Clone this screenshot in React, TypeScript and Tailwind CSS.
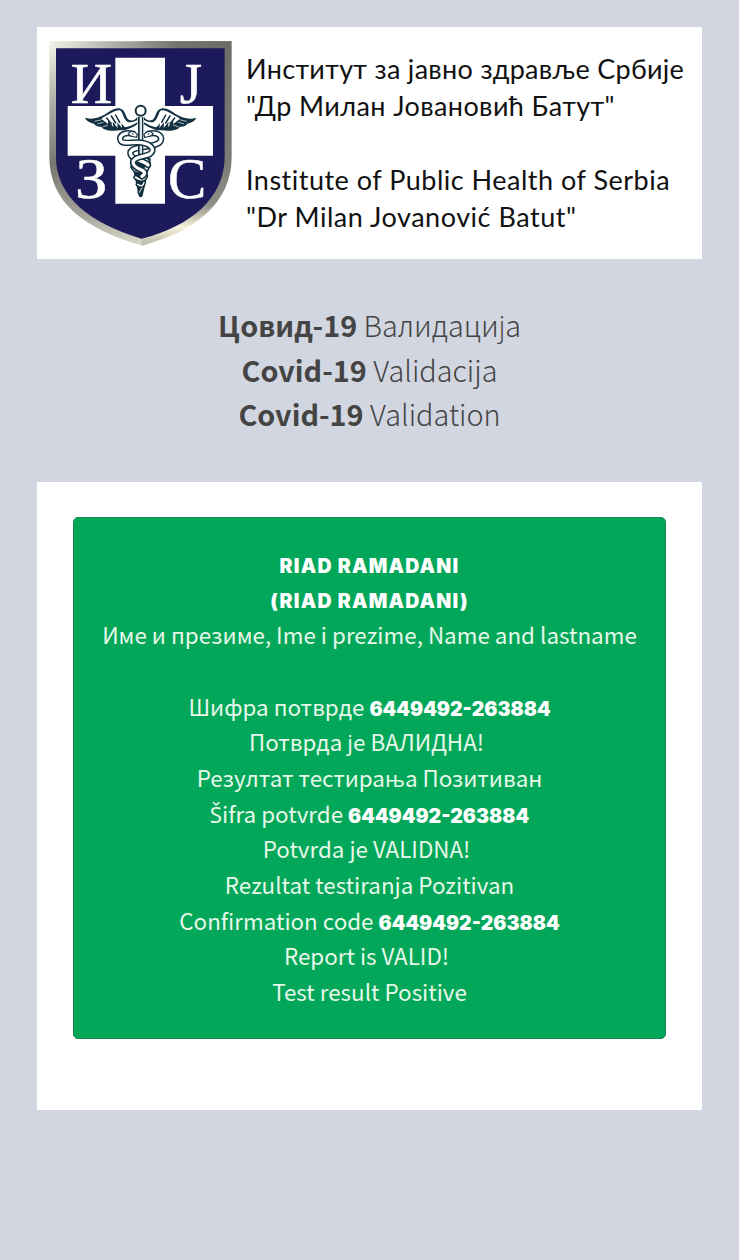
import type { ReactNode } from "react";

const NAVY = "#1d1a5c";
const INK = "#12303f";

function Wing() {
  return (
    <g>
      <path
        d="M15 68 C35 75 55 70 76 58 C92 46 108 36 122 41 C137 46 136 66 146 74 C156 79 166 75 172 66 L172 88 C160 98 148 100 134 106 C112 104 95 111 78 104 C70 102 66 98 64 95 C52 96 44 91 42 86 C28 83 18 76 15 68Z"
        fill={INK}
      />
      <path
        d="M66 69 C92 55 108 44 120 46 C129 50 130 74 142 80 C152 84 164 80 172 75 L172 82 C160 90 148 95 136 97 C130 92 126 88 124 84 L126 99 L112 82 L113 99 L98 80 L100 97 L84 76 L84 92 L66 75Z"
        fill="#fff"
      />
      <path d="M44 79 L66 74 M52 87 L74 80 M68 96 L84 90" stroke="#fff" strokeWidth="2" fill="none" />
      <path d="M66 76 L82 88 M80 69 L94 86 M94 63 L107 84 M107 60 L119 82" stroke={INK} strokeWidth="4.5" fill="none" strokeLinecap="round" />
    </g>
  );
}

function Snake({ d, width = 9 }: { d: string; width?: number }) {
  return (
    <g fill="none" strokeLinecap="round" strokeLinejoin="round">
      <path d={d} stroke={INK} strokeWidth={width + 9} />
      <path d={d} stroke="#fff" strokeWidth={width} />
    </g>
  );
}

function Crest() {
  return (
    <svg viewBox="3 3 627 696" className="h-[232px] w-[209px] shrink-0" role="img">
      <defs>
        <linearGradient id="rimTop" x1="0" y1="0" x2="1" y2="0">
          <stop offset="0" stopColor="#f3f2e8" />
          <stop offset="0.35" stopColor="#b0afa8" />
          <stop offset="0.7" stopColor="#74736f" />
          <stop offset="1" stopColor="#6c6b68" />
        </linearGradient>
        <linearGradient id="rimLeft" x1="0" y1="0" x2="0" y2="1">
          <stop offset="0" stopColor="#f6f5ec" />
          <stop offset="0.25" stopColor="#bab9b0" />
          <stop offset="0.6" stopColor="#777670" />
          <stop offset="0.85" stopColor="#a5a49a" />
          <stop offset="1" stopColor="#dcdacb" />
        </linearGradient>
        <linearGradient id="rimRight" x1="0" y1="0" x2="0" y2="1">
          <stop offset="0" stopColor="#6c6b68" />
          <stop offset="0.6" stopColor="#7d7c77" />
          <stop offset="0.8" stopColor="#8f8e86" />
          <stop offset="0.91" stopColor="#f7f3da" />
          <stop offset="1" stopColor="#b5b3a5" />
        </linearGradient>
      </defs>
      <path d="M317 46 H587 V392 C587 530 480 615 317 659Z" fill="url(#rimRight)" />
      <path d="M40 46 H318 V659 C145 608 40 530 40 392Z" fill="url(#rimLeft)" />
      <path d="M40 46 H587 L566 68 H60Z" fill="url(#rimTop)" />
      <path d="M60 67 H566 V392 C566 515 465 600 317 638 C165 592 60 515 60 392Z" fill={NAVY} />
      <path d="M238 95 H387 V240 H531 V389 H387 V533 H238 V389 H95 V240 H238Z" fill="#fff" />
      <g fill="#fff" stroke="#fff" strokeWidth="1.5" className="[font-family:'Liberation_Serif',serif] text-[172px]">
        <text x="104" y="230">И</text>
        <text x="431" y="230">Ј</text>
        <text x="117" y="515" textLength="98" lengthAdjust="spacingAndGlyphs">З</text>
        <text x="396" y="515">С</text>
      </g>
      <g transform="translate(132 207)">
        <Wing />
        <g transform="translate(364 0) scale(-1 1)">
          <Wing />
        </g>
        <path d="M152 190 L213 190 L188 302 Q182 312 176 302Z" fill={INK} />
        <Snake d="M178 292 C182 284 188 278 188 272" width={3} />
        <Snake d="M173 268 C184 276 190 272 192 262" width={4} />
        <Snake d="M167 247 C178 256 192 256 197 244" width={6} />
        <Snake d="M160 216 C170 232 196 232 203 212 C205 202 200 194 190 190" width={9} />
        <Snake d="M206 116 C232 110 248 122 242 138 C236 150 210 153 190 156 C158 160 144 168 154 182 C162 194 196 198 204 210" width={10} />
        <path d="M174 66 H190 V180 H174Z" fill={INK} />
        <path d="M179 66 H186 V180 H179Z" fill="#dfe5e8" />
        <Snake d="M158 116 C132 110 116 122 122 137 C128 150 160 139 184 143 C216 148 226 166 210 177 C196 186 168 184 160 198 C155 210 170 219 186 226 C198 232 194 240 186 244" width={10} />
        <path d="M145 116 C151 107 163 107 172 118 L170 127 C160 125 150 125 145 116Z M219 116 C213 107 201 107 192 118 L194 127 C204 125 214 125 219 116Z" fill="#fff" stroke={INK} strokeWidth="3.5" />
        <circle cx="182" cy="47" r="15" fill="#fff" stroke={INK} strokeWidth="6" />
        <circle cx="158" cy="117" r="2.5" fill={INK} />
        <circle cx="206" cy="117" r="2.5" fill={INK} />
      </g>
    </svg>
  );
}

function Row({ children, className = "" }: { children: ReactNode; className?: string }) {
  return <p className={`h-[35.7px] ${className}`}>{children}</p>;
}

function Name({ children }: { children: ReactNode }) {
  return (
    <span className="[font-family:Inter,'Liberation_Sans',sans-serif] text-[19.5px] font-black tracking-[1.2px] text-white">
      {children}
    </span>
  );
}

function Code({ children }: { children: ReactNode }) {
  return (
    <span className="[font-family:Inter,'Liberation_Sans',sans-serif] text-[19.5px] font-black text-white">
      {children}
    </span>
  );
}

export default function App() {
  return (
    <div className="min-h-[1260px] w-[739px] bg-[#d2d6e0] px-[37px] pt-[27px]">
      <header className="flex h-[232px] bg-white">
        <Crest />
        <div className="flex flex-col pt-[23px] [font-family:Lato,'Open_Sans',sans-serif] text-[27px] leading-[37px] whitespace-nowrap text-[#111]">
          <p className="tracking-[0.3px]">Институт за јавно здравље Србије</p>
          <p className="tracking-[0.4px]">"Др Милан Јовановић Батут"</p>
          <p className="mt-[37px] tracking-[0.5px]">Institute of Public Health of Serbia</p>
          <p className="tracking-[0.53px]">"Dr Milan Jovanović Batut"</p>
        </div>
      </header>

      <h1 className="mt-[44px] text-center [font-family:'Noto_Sans_CJK_SC','Open_Sans',sans-serif] text-[28.8px] leading-[44.6px] font-light whitespace-nowrap text-[#444]">
        <div><b className="font-bold">Цовид-19</b> Валидација</div>
        <div><b className="font-bold">Covid-19</b> Validacija</div>
        <div><b className="font-bold">Covid-19</b> Validation</div>
      </h1>

      <main className="mt-[45px] h-[628px] bg-white px-[36px] pt-[35px]">
        <section className="h-[522px] rounded-[5px] border border-[#1b8552] bg-[#03a75a] pt-[28px] text-center [font-family:'Noto_Sans_CJK_SC','Open_Sans',sans-serif] text-[22.4px] leading-[35.7px] whitespace-nowrap text-[#e6f8e9]">
          <Row><Name>RIAD RAMADANI</Name></Row>
          <Row><Name>(RIAD RAMADANI)</Name></Row>
          <Row>Име и презиме, Ime i prezime, Name and lastname</Row>
          <Row className="mt-[35.7px]">Шифра потврде <Code>6449492-263884</Code></Row>
          <Row className="pr-[6px]">Потврда је ВАЛИДНА!</Row>
          <Row>Резултат тестирања Позитиван</Row>
          <Row>
            <span className="[font-family:'Noto_Sans',sans-serif] leading-none">Š</span>ifra potvrde <Code>6449492-263884</Code>
          </Row>
          <Row className="pr-[6px]">Potvrda je VALIDNA!</Row>
          <Row>Rezultat testiranja Pozitivan</Row>
          <Row>Confirmation code <Code>6449492-263884</Code></Row>
          <Row className="pr-[6px]">Report is VALID!</Row>
          <Row>Test result Positive</Row>
        </section>
      </main>
    </div>
  );
}
